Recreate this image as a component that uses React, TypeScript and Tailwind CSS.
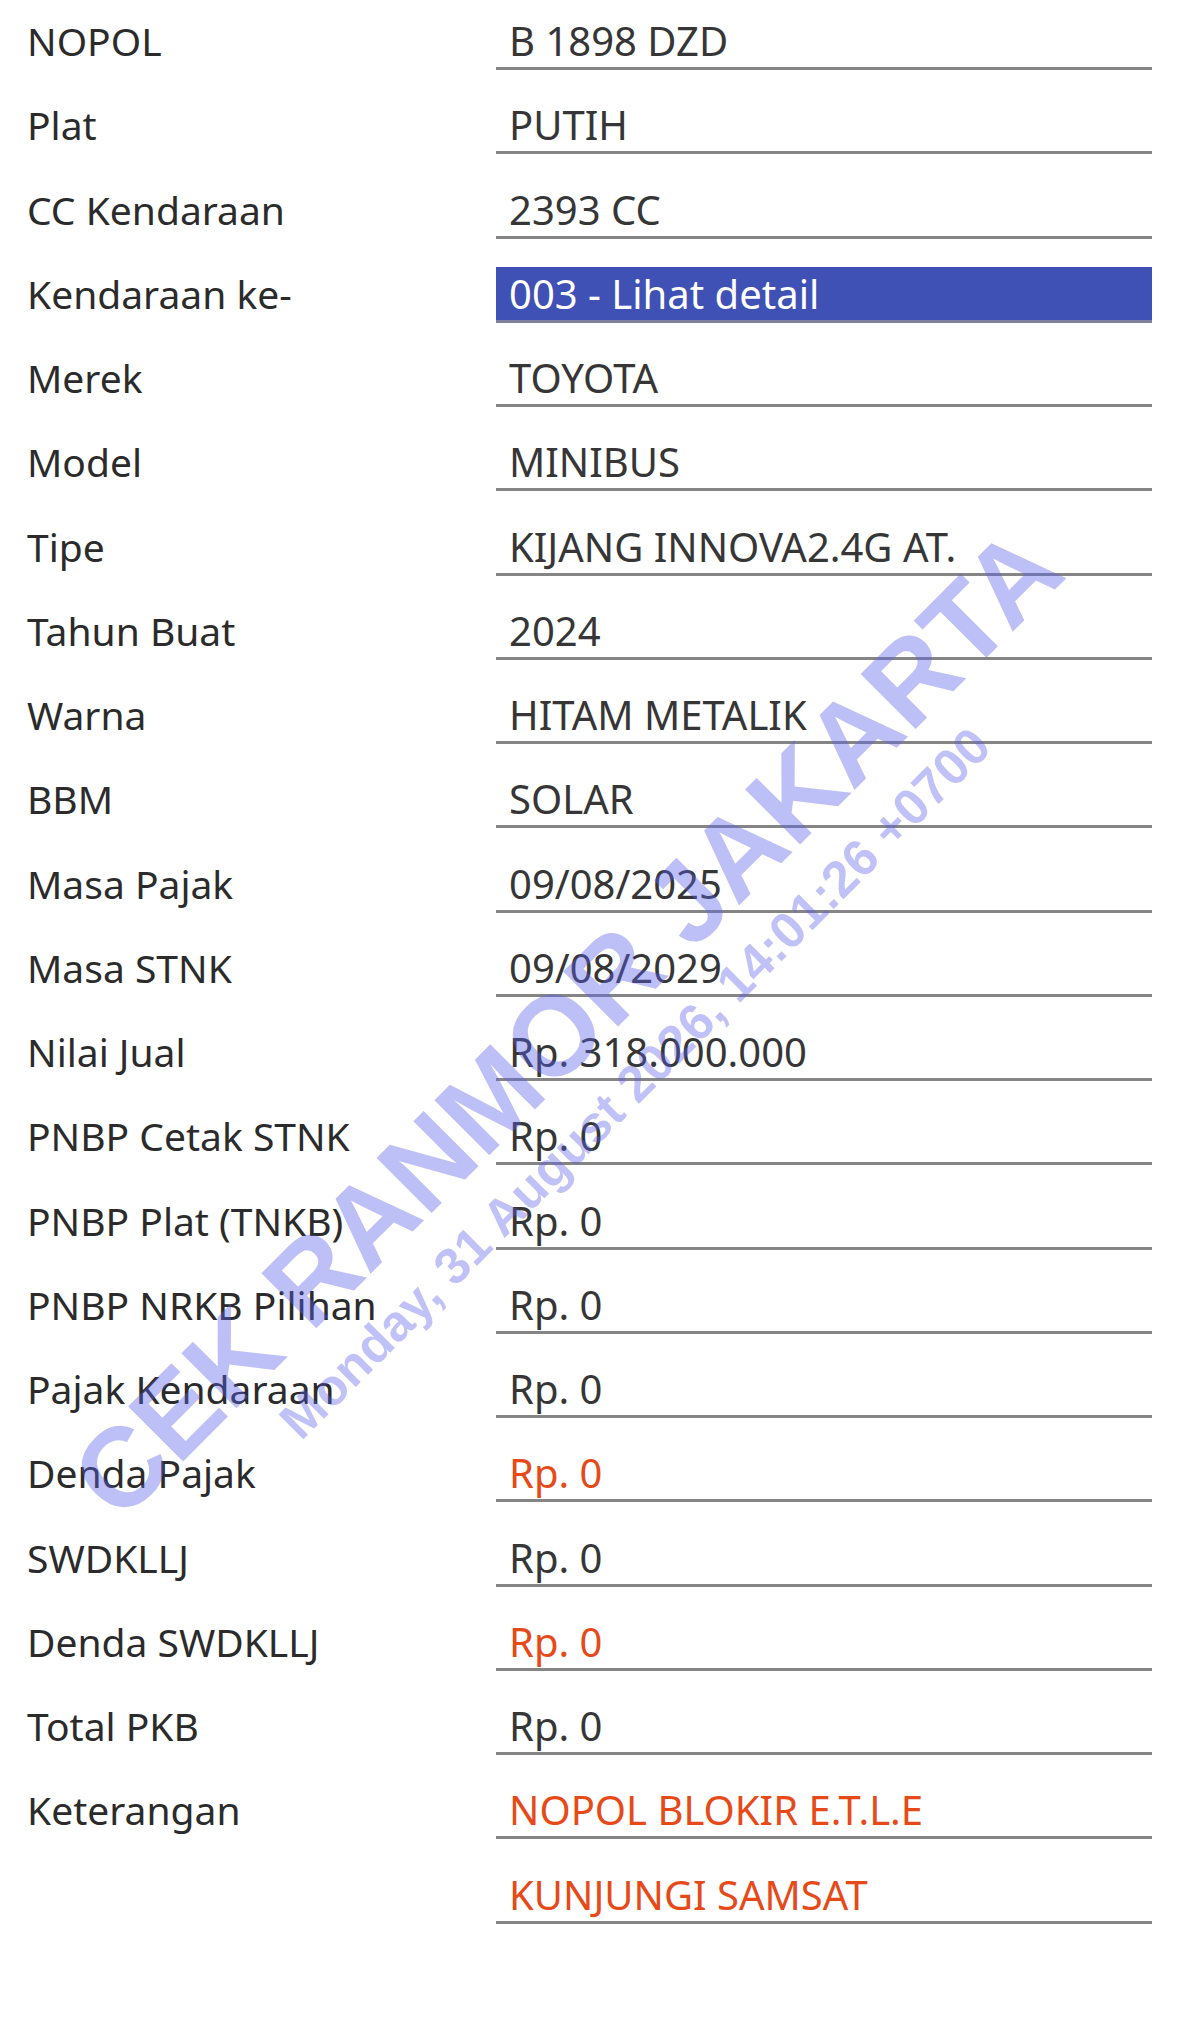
import React from "react";

type Row = { label: string; value: string; kind?: "normal" | "red" | "blue" };

const rows: Row[] = [
  { label: "NOPOL", value: "B 1898 DZD" },
  { label: "Plat", value: "PUTIH" },
  { label: "CC Kendaraan", value: "2393 CC" },
  { label: "Kendaraan ke-", value: "003 - Lihat detail", kind: "blue" },
  { label: "Merek", value: "TOYOTA" },
  { label: "Model", value: "MINIBUS" },
  { label: "Tipe", value: "KIJANG INNOVA2.4G AT." },
  { label: "Tahun Buat", value: "2024" },
  { label: "Warna", value: "HITAM METALIK" },
  { label: "BBM", value: "SOLAR" },
  { label: "Masa Pajak", value: "09/08/2025" },
  { label: "Masa STNK", value: "09/08/2029" },
  { label: "Nilai Jual", value: "Rp. 318.000.000" },
  { label: "PNBP Cetak STNK", value: "Rp. 0" },
  { label: "PNBP Plat (TNKB)", value: "Rp. 0" },
  { label: "PNBP NRKB Pilihan", value: "Rp. 0" },
  { label: "Pajak Kendaraan", value: "Rp. 0" },
  { label: "Denda Pajak", value: "Rp. 0", kind: "red" },
  { label: "SWDKLLJ", value: "Rp. 0" },
  { label: "Denda SWDKLLJ", value: "Rp. 0", kind: "red" },
  { label: "Total PKB", value: "Rp. 0" },
  { label: "Keterangan", value: "NOPOL BLOKIR E.T.L.E", kind: "red" },
  { label: "", value: "KUNJUNGI SAMSAT", kind: "red" },
];

export default function App() {
  return (
    <div
      className="relative w-[1200px] h-[2041px] overflow-hidden bg-white"
      style={{ fontFamily: '"Noto Sans", "Open Sans", sans-serif' }}
    >
      <div className="flex flex-col gap-[28.25px] pt-[14px]">
        {rows.map((r, i) => (
          <div key={i} className="flex h-[56px]">
            <div className="w-[496px] pl-[27px] text-[39px] leading-[53px] text-[#2b2b2b] whitespace-nowrap">
              {r.label}
            </div>
            <div
              className={
                r.kind === "blue"
                  ? "w-[656px] h-[56px] pl-[13px] text-[40px] leading-[53px] whitespace-nowrap bg-[#3f51b5] text-white border-b-[3px] border-[#7d7f9c]"
                  : r.kind === "red"
                  ? "w-[656px] h-[56px] pl-[13px] text-[40px] leading-[53px] whitespace-nowrap text-[#e64a19] border-b-[3px] border-[#858585]"
                  : "w-[656px] h-[56px] pl-[13px] text-[40px] leading-[53px] whitespace-nowrap text-[#363636] border-b-[3px] border-[#858585]"
              }
            >
              {r.value}
            </div>
          </div>
        ))}
      </div>

      {/* watermark overlay */}
      <div className="pointer-events-none absolute inset-0" style={{ fontFamily: '"Liberation Sans", Arial, sans-serif' }}>
        <div className="absolute left-[567px] top-[1023px] w-0 h-0">
          <div className="absolute left-0 top-0 -translate-x-1/2 -translate-y-1/2 -rotate-[45deg] whitespace-nowrap text-[113px] font-bold leading-none text-[rgba(90,95,235,0.4)]">
            CEK RANMOR JAKARTA
          </div>
        </div>
        <div className="absolute left-[635px] top-[1083px] w-0 h-0">
          <div className="absolute left-0 top-0 -translate-x-1/2 -translate-y-1/2 -rotate-[45deg] whitespace-nowrap text-[51px] font-bold leading-none text-[rgba(90,95,235,0.38)]">
            Monday, 31 August 2026, 14:01:26 +0700
          </div>
        </div>
      </div>
    </div>
  );
}
